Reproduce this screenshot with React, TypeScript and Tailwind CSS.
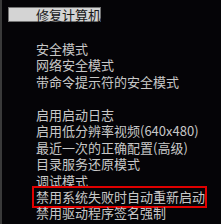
const items = [
  '安全模式',
  '网络安全模式',
  '带命令提示符的安全模式',
  '',
  '启用启动日志',
  '启用低分辨率视频(640x480)',
  '最近一次的正确配置(高级)',
  '目录服务还原模式',
  '调试模式',
  '禁用系统失败时自动重新启动',
  '禁用驱动程序签名强制',
]

export default function App() {
  return (
    <div className="w-[221px] h-[224px] bg-[#050407] flex overflow-hidden font-['Noto_Sans_CJK_SC',sans-serif] text-[13px] text-[#c8c8c8]">
      <div className="w-[2px] h-full bg-[#3a3a3a] shrink-0" />
      <div className="flex flex-col flex-1">
        {/* selected menu title */}
        <div className="mt-[7px] ml-[6px] w-[93px] h-[15px] bg-neutral-300 border border-neutral-500 flex items-center pl-[27px] leading-[13px] text-neutral-900 whitespace-nowrap">
          修复计算机
        </div>
        <div className="flex flex-col mt-[18px] pl-[34px]">
          {items.map((t, i) =>
            i === 9 ? (
              <div key={i} className="-ml-[4px] -my-[3px] w-[175px] h-[22px] border-2 border-[#e00000] pl-[2px] flex items-center whitespace-nowrap leading-[13px]">
                {t}
              </div>
            ) : (
              <div key={i} className="h-[16.5px] flex items-center whitespace-nowrap leading-[13px]">
                {t}
              </div>
            )
          )}
        </div>
      </div>
    </div>
  )
}
